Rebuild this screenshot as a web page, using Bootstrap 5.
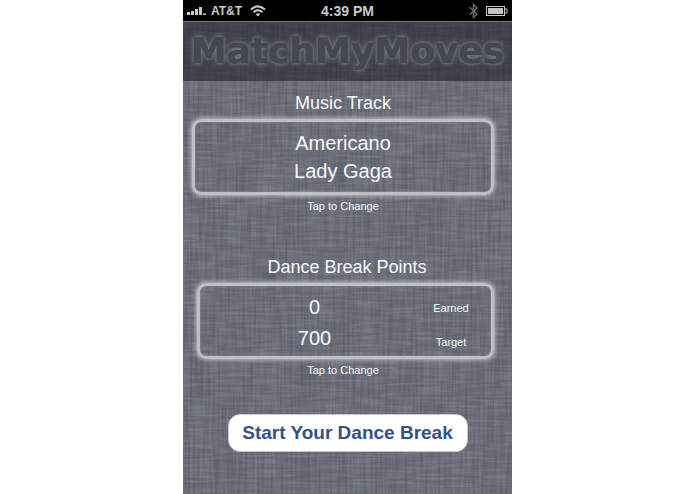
<!DOCTYPE html>
<html lang="en">
<head>
<meta charset="utf-8">
<meta name="viewport" content="width=device-width, initial-scale=1">
<title>MatchMyMoves</title>
<link href="https://cdn.jsdelivr.net/npm/bootstrap@5.3.0/dist/css/bootstrap.min.css" rel="stylesheet">
<style>
body { background: #fff; font-family: "Liberation Sans", Arial, sans-serif; }
.phone {
  max-width: 329px;
  color: #f8f8fa;
  background-color: #6b6e79;
  background-image:
    url("data:image/svg+xml,%3Csvg xmlns='http://www.w3.org/2000/svg' width='329' height='494'%3E%3Cfilter id='h' x='0' y='0' width='100%25' height='100%25' color-interpolation-filters='sRGB'%3E%3CfeTurbulence type='fractalNoise' baseFrequency='.03 .4' numOctaves='2' seed='4'/%3E%3CfeColorMatrix values='0 0 0 0 .85 0 0 0 0 .87 0 0 0 0 .93 .34 0 0 0 -.12'/%3E%3C/filter%3E%3Cfilter id='v' x='0' y='0' width='100%25' height='100%25' color-interpolation-filters='sRGB'%3E%3CfeTurbulence type='fractalNoise' baseFrequency='.4 .02' numOctaves='2' seed='9'/%3E%3CfeColorMatrix values='0 0 0 0 .1 0 0 0 0 .1 0 0 0 0 .15 .4 0 0 0 -.14'/%3E%3C/filter%3E%3Crect width='100%25' height='100%25' filter='url(%23h)'/%3E%3Crect width='100%25' height='100%25' filter='url(%23v)'/%3E%3C/svg%3E");
}
.status { background: #000; height: 21px; color: #c9c9cb; padding: 0 4px; }
.status > div { flex: 1 1 0; }
.carrier { font-size: 12px; line-height: 20px; }
.clock { font-size: 14px; line-height: 20px; }
.brand { background: rgba(28, 29, 33, .54); border-top: 1px solid #777980; height: 60px; }
.brand h1 {
  font: bold 36px/58px "DejaVu Sans", Verdana, sans-serif;
  color: #454850;
  text-shadow: 0 0 1px #30333a, 0 0 3px #8e929b, 0 0 6px #747780;
}
.panels { padding: 10px 18px 0 9px; }
.group-title { font-size: 18px; line-height: 24px; }
.glow {
  color: inherit;
  background: none;
  border: 3px solid #bfc0c5;
  border-radius: 9px;
  box-shadow: 0 0 4px 1px rgba(225, 226, 230, .75), inset 0 0 2px rgba(215, 216, 220, .5);
  height: 76px;
  font-size: 20px;
  line-height: 28px;
}
.hint { font-size: 11px; line-height: 14px; margin-top: 4px; }
.points-group { margin-top: 42px; }
.points-box { margin-left: 5px; padding: 4px 18px 0 0; line-height: 31px; }
.units { width: 44px; padding-top: 4px; font-size: 11px; line-height: 34px; }
.start {
  width: 240px;
  height: 38px;
  margin: 37px auto 0;
  border: 1px solid #c5c6ca;
  border-radius: 12px;
  background: #fff;
  color: #354f89;
  font-size: 19px;
  line-height: 34px;
}
</style>
<script src="https://cdn.jsdelivr.net/npm/bootstrap@5.3.0/dist/js/bootstrap.bundle.min.js" defer></script>
</head>
<body>
<div class="phone min-vh-100 mx-auto d-flex flex-column">
  <div class="status d-flex align-items-center fw-bold">
    <div class="d-flex align-items-center carrier">
      <svg width="20" height="10" viewBox="0 0 20 10" fill="#c9c9cb" aria-hidden="true"><path d="M0 6h3v3H0zM4 5h3v4H4zM8 3h3v6H8zM12 1h3v8h-3zM16 7.6h3V9h-3z"/></svg>
      <span class="ms-1">AT&amp;T</span>
      <svg class="ms-2" width="16" height="12" viewBox="0 0 16 12" fill="none" stroke="#c9c9cb" stroke-width="2" aria-hidden="true"><path d="M1 4.6Q8-1.8 15 4.6M3.6 7.2Q8 3.2 12.4 7.2"/><path d="M8 11.5L5.7 9.2Q8 7.4 10.3 9.2z" fill="#c9c9cb" stroke="none"/></svg>
    </div>
    <span class="clock">4:39 PM</span>
    <div class="d-flex align-items-center justify-content-end gap-2">
      <svg width="9" height="16" viewBox="0 0 9 16" fill="none" stroke="#66686b" stroke-width="1.5" aria-hidden="true"><path d="M.7 4.3L8 11.2 4.5 14.5v-13L8 4.8.7 11.7"/></svg>
      <svg width="22" height="10" viewBox="0 0 22 10" aria-hidden="true"><rect x=".5" y=".5" width="18" height="9" fill="none" stroke="#c9c9cb"/><path d="M2 2h15v6H2z" fill="#c4c4c6"/><path d="M19 3h2v4h-2" fill="none" stroke="#c9c9cb"/></svg>
    </div>
  </div>
  <header class="brand d-flex justify-content-center">
    <h1 class="m-0">MatchMyMoves</h1>
  </header>
  <main class="text-center">
    <div class="panels">
      <section class="d-flex flex-column">
        <h2 class="group-title fw-normal m-0" id="track-title">Music Track</h2>
        <button type="button" class="glow w-100 p-0 mt-1" aria-describedby="track-title">
          <span class="d-block">Americano</span>
          <span class="d-block">Lady Gaga</span>
        </button>
        <p class="hint mb-0">Tap to Change</p>
      </section>
      <section class="points-group d-flex flex-column">
        <h2 class="group-title fw-normal m-0 ps-2" id="points-title">Dance Break Points</h2>
        <button type="button" class="glow points-box mt-1 d-flex align-items-center" aria-describedby="points-title">
          <span class="flex-grow-1"><span class="d-block">0</span><span class="d-block">700</span></span>
          <span class="units"><span class="d-block">Earned</span><span class="d-block">Target</span></span>
        </button>
        <p class="hint mb-0">Tap to Change</p>
      </section>
    </div>
    <button type="button" class="start d-block fw-bold p-0">Start Your Dance Break</button>
  </main>
</div>
</body>
</html>
